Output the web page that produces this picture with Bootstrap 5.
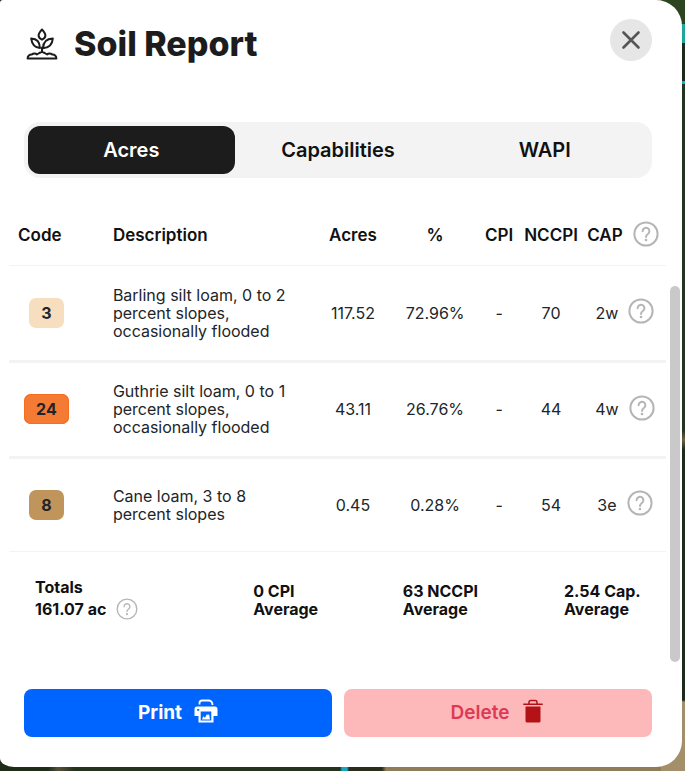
<!DOCTYPE html>
<html lang="en">
<head>
<meta charset="utf-8">
<meta name="viewport" content="width=device-width, initial-scale=1">
<title>Soil Report</title>
<link href="https://cdn.jsdelivr.net/npm/bootstrap@5.3.0/dist/css/bootstrap.min.css" rel="stylesheet">
<style>
  body {
    font-family: Inter, "Liberation Sans", sans-serif;
    font-size: 16px;
    color: #1c1c1c;
    padding: 0 3px 4px 0;
    background:
      linear-gradient(180deg, #2c4420 0 24px, #1fa79c 24px 43px, #1b2a1b 43px 81px, #22a9c4 81px 84px, #223420 84px 430px, #6e6244 440px, #1d2b1c 450px 700px, #a48f6b 702px) right top / 24px 100% no-repeat,
      linear-gradient(90deg, #1f2c1a 0 48px, #55503a 58px, #24321e 75px 340px, #18a6bd 342px 347px, #2b2c1c 349px 382px, #8f7c59 386px) #24321e;
  }
  .report {
    background: #fff;
    border-radius: 3px 26px 26px 14px / 3px 26px 26px 9px;
    min-height: calc(100vh - 4px);
  }
  .report-head { padding: 19px 30px 53px 26px; }
  .report-title { font-size: 34px; line-height: 50px; font-weight: 800; }
  .close-round { width: 42px; height: 42px; background: #e6e6e6; }
  .seg { margin: 0 30px 0 24px; padding: 4px; background: #f3f3f3; border-radius: 16px; }
  .seg .nav-link { height: 48px; padding: 0; font-size: 20px; font-weight: 600; color: #111; border-radius: 12px; }
  .seg .nav-link.active { background: #1c1c1c; color: #fff; }
  .report-body { padding: 26px 2px 27px 9px; }
  .soils { table-layout: fixed; line-height: 18px; }
  .soils th, .soils td { padding: 0; background: none; color: inherit; text-align: center; vertical-align: middle; border-bottom: 3px solid #f3f3f3; }
  .soils th { height: 61px; padding-top: 2px; color: #111; font-size: 17px; font-weight: 600; border-bottom-width: 1px; }
  .soils td { height: 96px; }
  .soils tr:last-child td { height: 94px; border-bottom-width: 1px; }
  .soils th:first-child { text-align: left; padding-left: 9px; }
  .soils th:nth-child(2), .soils td:nth-child(2) { text-align: left; padding-left: 29px; padding-right: 8px; }
  .soils td:last-child { padding-left: 4px; }
  .w-code { width: 11.4%; } .w-num { width: 12.5%; } .w-cpi { width: 7%; } .w-nc { width: 8.8%; } .w-cap { width: 13.1%; }
  .soil-code { display: inline-block; padding: 6px 12px; border-radius: 7px; font-weight: 700; line-height: 18px; }
  .code-3 { background: #f7debf; }
  .code-24 { background: #f57a34; box-shadow: inset 0 0 0 1px #f66d1c; }
  .code-8 { background: #c0955b; }
  .cap-cell { gap: 10px; }
  .help { border: 0; padding: 0; background: none; line-height: 0; color: #b5b5b5; }
  .soils .help { margin-bottom: 3px; }
  .soils .help svg { stroke-width: 2; }
  .totals { padding: 24px 18px 41px 26px; font-weight: 700; line-height: 18px; color: #111; }
  .total-acres { line-height: 22px; width: 35.6%; }
  .total-cpi { width: 24.4%; }
  .total-nccpi { width: 26.3%; }
  .avg { width: 82px; padding-bottom: 2px; }
  .thumb { width: 10px; margin-top: 82px; border-radius: 5px; background: #c9c9c9; }
  .actions { padding: 0 30px 30px 24px; gap: 12px; }
  .actions .btn { height: 48px; border-radius: 8px; padding: 0; font-size: 19px; font-weight: 600; border: 0; gap: 12px; }
  .actions .btn-print { background: #0065ff; color: #fff; font-weight: 700; }
  .btn-remove { background: #fdb8b9; color: #dd3a55; }
</style>
<script src="https://cdn.jsdelivr.net/npm/bootstrap@5.3.0/dist/js/bootstrap.bundle.min.js" defer></script>
</head>
<body>
<svg class="d-none" aria-hidden="true">
  <symbol id="q" viewBox="0 0 26 26"><g fill="none" stroke="currentColor" stroke-linecap="round"><circle cx="13" cy="13" r="11.6"/><path d="M9.600 10.200a3.400 3.400 0 1 1 5.300 2.800c-1.300.9-1.900 1.400-1.900 3"/></g><circle cx="13" cy="19" r="1.300" fill="currentColor"/></symbol>
</svg>
<main class="report d-flex flex-column">
  <header class="report-head d-flex justify-content-between align-items-start">
    <div class="d-flex align-items-center">
      <svg class="me-3" width="32" height="32" viewBox="0 0 32 32" fill="none" stroke="#1c1c1c" stroke-width="2" stroke-linejoin="round" stroke-linecap="round" aria-hidden="true">
        <path d="M16 1.500c2.400 2.600 3.400 4.400 3.400 6 0 1.800-1.200 3.200-3.400 4.200-2.200-1-3.400-2.400-3.400-4.200 0-1.600 1-3.400 3.400-6z"/>
        <path d="M5.200 10.600c5.200.2 8.600 3 8.800 9.400-5-.4-8-3.200-8.800-9.400z"/>
        <path d="M26.800 10.600c-6 .2-9.600 3.600-9.800 9.600 6-.2 9.200-3.400 9.800-9.600z"/>
        <path d="M16 23.500v-4M1.600 30.400h28.800c0-2.600-2-4-4.200-3.800-1.400-1.200-3.800-1.400-5.200-.2-1.400-.6-2.400-1.800-5-2.600-2.600.8-3.600 2-5 2.600-1.400-1.200-3.800-1-5.200.2-2.200-.2-4.200 1.200-4.200 3.800z"/>
      </svg>
      <h1 class="report-title mb-0">Soil Report</h1>
    </div>
    <button type="button" class="close-round btn rounded-circle p-0 border-0 d-flex align-items-center justify-content-center" aria-label="Close">
      <svg width="20" height="20" viewBox="0 0 20 20" stroke="#555" stroke-width="2.600" stroke-linecap="round"><path d="M2.500 2.500l15 15M17.500 2.500l-15 15"/></svg>
    </button>
  </header>

  <nav class="seg nav nav-pills nav-fill nav-justified" role="tablist">
    <button type="button" class="nav-link active" role="tab" aria-selected="true">Acres</button>
    <button type="button" class="nav-link" role="tab" aria-selected="false">Capabilities</button>
    <button type="button" class="nav-link" role="tab" aria-selected="false">WAPI</button>
  </nav>

  <div class="report-body d-flex flex-grow-1">
    <div class="flex-grow-1 me-1">
      <table class="soils table mb-0">
        <colgroup><col class="w-code"><col><col class="w-num"><col class="w-num"><col class="w-cpi"><col class="w-nc"><col class="w-cap"></colgroup>
        <thead>
          <tr><th scope="col">Code</th><th scope="col">Description</th><th scope="col">Acres</th><th scope="col">%</th><th scope="col">CPI</th><th scope="col">NCCPI</th>
            <th scope="col"><div class="cap-cell d-flex justify-content-center align-items-center">CAP <button type="button" class="help" aria-label="About CAP"><svg width="26" height="26"><use href="#q"/></svg></button></div></th></tr>
        </thead>
        <tbody>
          <tr><td><span class="soil-code code-3">3</span></td><td>Barling silt loam, 0 to 2 percent slopes, occasionally flooded</td><td>117.52</td><td>72.96%</td><td>-</td><td>70</td>
            <td><div class="cap-cell d-flex justify-content-center align-items-center">2w <button type="button" class="help" aria-label="About 2w"><svg width="26" height="26"><use href="#q"/></svg></button></div></td></tr>
          <tr><td><span class="soil-code code-24">24</span></td><td>Guthrie silt loam, 0 to 1 percent slopes, occasionally flooded</td><td>43.11</td><td>26.76%</td><td>-</td><td>44</td>
            <td><div class="cap-cell d-flex justify-content-center align-items-center">4w <button type="button" class="help" aria-label="About 4w"><svg width="26" height="26"><use href="#q"/></svg></button></div></td></tr>
          <tr><td><span class="soil-code code-8">8</span></td><td>Cane loam, 3 to 8 percent slopes</td><td>0.45</td><td>0.28%</td><td>-</td><td>54</td>
            <td><div class="cap-cell d-flex justify-content-center align-items-center">3e <button type="button" class="help" aria-label="About 3e"><svg width="26" height="26"><use href="#q"/></svg></button></div></td></tr>
        </tbody>
      </table>
      <div class="totals d-flex align-items-end">
        <div class="total-acres">Totals<div class="cap-cell d-flex align-items-center">161.07 ac <button type="button" class="help" aria-label="About totals"><svg width="22" height="22" stroke-width="1.600"><use href="#q"/></svg></button></div></div>
        <div class="total-cpi"><div class="avg">0 CPI Average</div></div>
        <div class="total-nccpi"><div class="avg">63 NCCPI Average</div></div>
        <div class="avg">2.54 Cap. Average</div>
      </div>
    </div>
    <div class="thumb flex-shrink-0" aria-hidden="true"></div>
  </div>

  <footer class="actions d-flex">
    <button type="button" class="btn btn-print flex-fill w-50 d-flex align-items-center justify-content-center">Print
      <svg class="mb-1" width="24" height="24" viewBox="0 0 24 24" fill="none" aria-hidden="true"><path d="M5.500 5.500V4Q5.500 1.500 8 1.500h6.800Q18.500 2 18.500 6" stroke="#fff" stroke-width="1.800"/><path fill="#fff" fill-rule="evenodd" d="M3 7.500h18A2.500 2.500 0 0 1 23.500 10v7h-4v6.500h-15V17h-4v-7A2.500 2.500 0 0 1 3 7.500zM6.700 12.500v9h10.600v-9zM3.200 10h2v1.700h-2z"/><path fill="#fff" d="M8 20.500l1.300-3.300 1.700 1.500 2-3.700 1 1.500 1-1.700 1 5.700z"/></svg>
    </button>
    <button type="button" class="btn btn-remove flex-fill w-50 d-flex align-items-center justify-content-center">Delete
      <svg class="mb-1" width="24" height="24" viewBox="0 0 24 24" fill="none" aria-hidden="true"><path d="M2.800 5.200h18.400M8 5V3.200Q8 1.500 9.700 1.500h4.600Q16 1.500 16 3.200V5" stroke="#b31217" stroke-width="1.500" stroke-linecap="round"/><path fill="#b31217" d="M4.500 7.500h15v14.500q0 1.500-1.500 1.500H6q-1.500 0-1.500-1.500z"/></svg>
    </button>
  </footer>
</main>
</body>
</html>
